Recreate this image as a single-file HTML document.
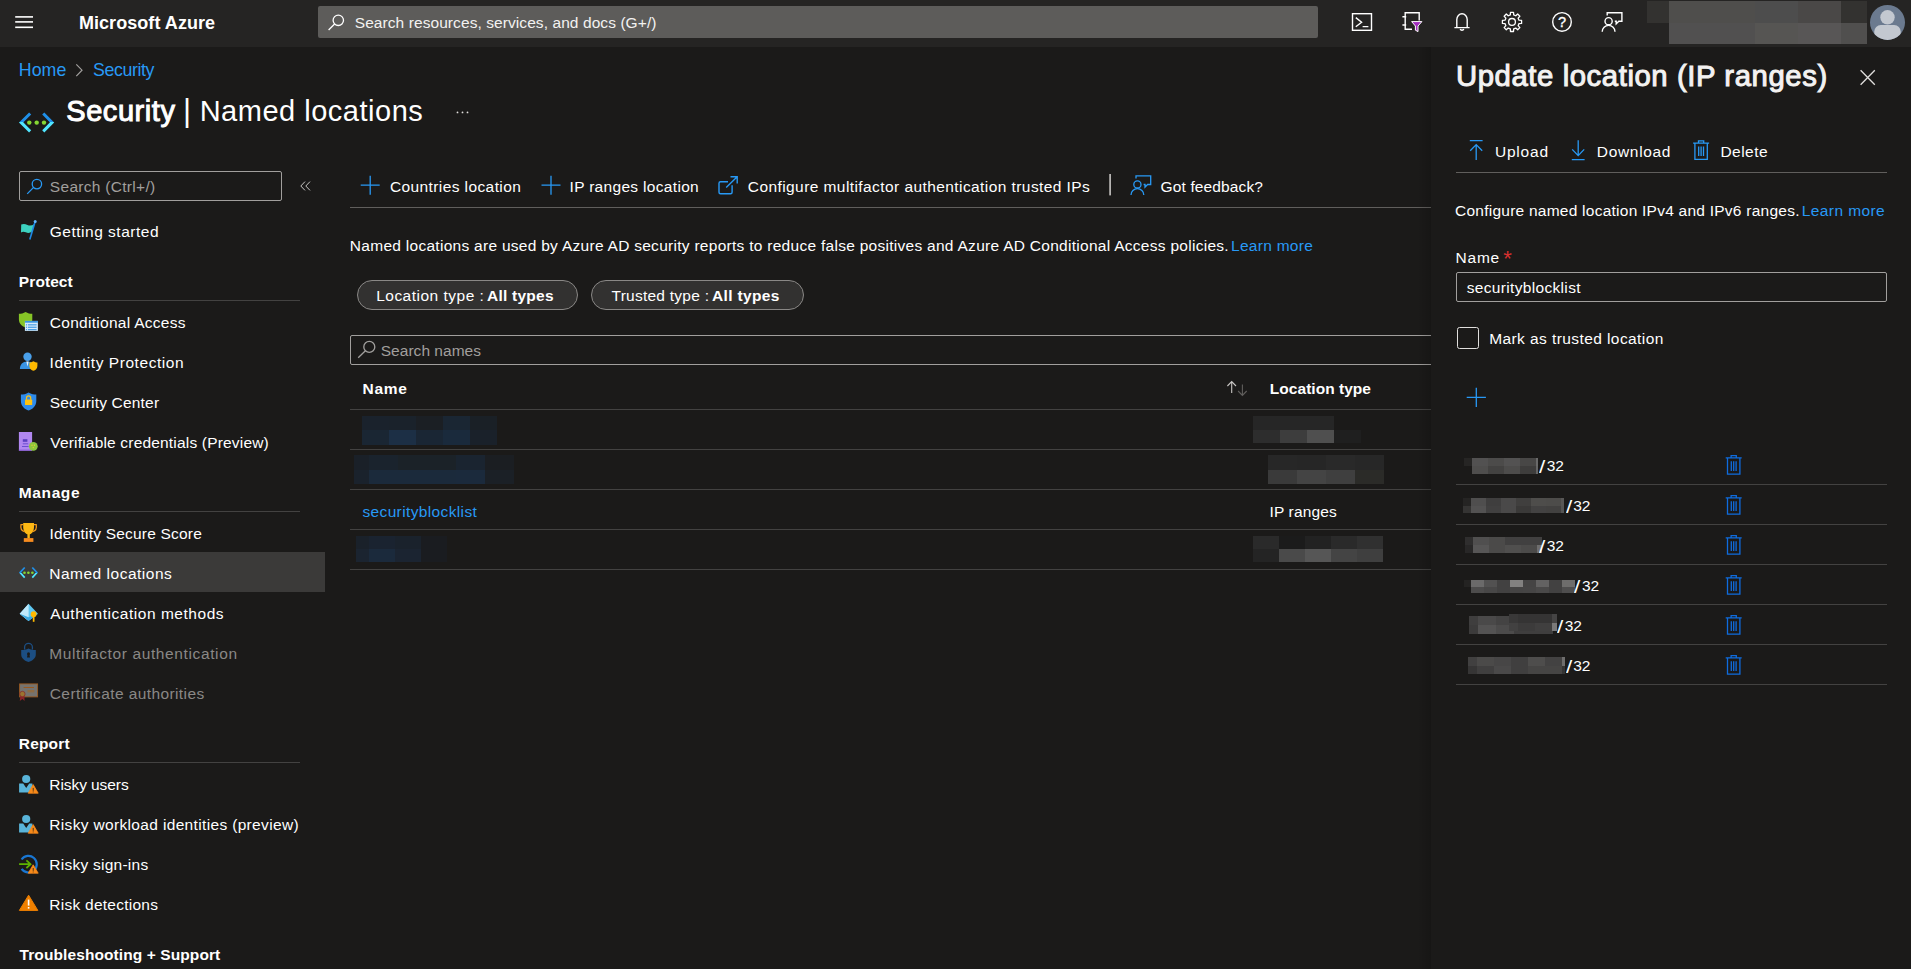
<!DOCTYPE html>
<html lang="en"><head><meta charset="utf-8"><title>Named locations - Microsoft Azure</title>
<style>
html,body{margin:0;padding:0}
body{width:1911px;height:969px;overflow:hidden;background:#1b1a19;font-family:"Liberation Sans", sans-serif;position:relative}
.t{position:absolute;white-space:nowrap;line-height:24px;height:24px}
.b{position:absolute}
#ico{position:absolute;left:0;top:0}
</style></head>
<body>
<div class="b" style="left:0px;top:0px;width:1911px;height:47px;background:#252423;"></div>
<div class="b" style="left:318px;top:6px;width:1000px;height:32px;background:#5d5c5a;border-radius:2px;"></div>
<div class="b" style="left:1647px;top:1px;width:22px;height:22px;background:#333230;"></div>
<div class="b" style="left:1669px;top:1px;width:86px;height:22px;background:#4f4e4c;"></div>
<div class="b" style="left:1755px;top:1px;width:43px;height:22px;background:#4d4d4d;"></div>
<div class="b" style="left:1798px;top:1px;width:43px;height:22px;background:#4a4847;"></div>
<div class="b" style="left:1841px;top:1px;width:26px;height:22px;background:#333230;"></div>
<div class="b" style="left:1669px;top:23px;width:86px;height:21px;background:#515050;"></div>
<div class="b" style="left:1755px;top:23px;width:43px;height:21px;background:#565553;"></div>
<div class="b" style="left:1798px;top:23px;width:43px;height:21px;background:#585656;"></div>
<div class="b" style="left:1841px;top:23px;width:26px;height:21px;background:#504f4e;"></div>
<div class="b" style="left:0px;top:552px;width:325px;height:40px;background:#3b3a39;"></div>
<div class="b" style="left:19px;top:171px;width:263px;height:30px;border:1px solid #a19f9d;box-sizing:border-box;border-radius:2px;"></div>
<div class="b" style="left:19px;top:300px;width:281px;height:1px;background:#434241;"></div>
<div class="b" style="left:19px;top:511px;width:281px;height:1px;background:#434241;"></div>
<div class="b" style="left:19px;top:762px;width:281px;height:1px;background:#434241;"></div>
<div class="b" style="left:350px;top:207px;width:1081px;height:1px;background:#605e5c;"></div>
<div class="b" style="left:357px;top:280px;width:221px;height:30px;background:#323130;border:1px solid #8a8886;box-sizing:border-box;border-radius:15px;"></div>
<div class="b" style="left:591px;top:280px;width:213px;height:30px;background:#323130;border:1px solid #8a8886;box-sizing:border-box;border-radius:15px;"></div>
<div class="b" style="left:350px;top:335px;width:1100px;height:30px;border:1px solid #a19f9d;box-sizing:border-box;border-radius:2px;"></div>
<div class="b" style="left:350px;top:409px;width:1081px;height:1px;background:#434241;"></div>
<div class="b" style="left:350px;top:449px;width:1081px;height:1px;background:#434241;"></div>
<div class="b" style="left:350px;top:489px;width:1081px;height:1px;background:#434241;"></div>
<div class="b" style="left:350px;top:529px;width:1081px;height:1px;background:#434241;"></div>
<div class="b" style="left:350px;top:569px;width:1081px;height:1px;background:#434241;"></div>
<div class="b" style="left:362px;top:416px;width:27px;height:14px;background:#1a222c;"></div>
<div class="b" style="left:362px;top:430px;width:27px;height:15px;background:#1a2633;"></div>
<div class="b" style="left:389px;top:416px;width:27px;height:14px;background:#1a222b;"></div>
<div class="b" style="left:389px;top:430px;width:27px;height:15px;background:#1c2f45;"></div>
<div class="b" style="left:416px;top:416px;width:27px;height:14px;background:#1b1f24;"></div>
<div class="b" style="left:416px;top:430px;width:27px;height:15px;background:#1a2634;"></div>
<div class="b" style="left:443px;top:416px;width:27px;height:14px;background:#1a2633;"></div>
<div class="b" style="left:443px;top:430px;width:27px;height:15px;background:#1a2a3c;"></div>
<div class="b" style="left:470px;top:416px;width:27px;height:14px;background:#1a2026;"></div>
<div class="b" style="left:470px;top:430px;width:27px;height:15px;background:#1a212a;"></div>
<div class="b" style="left:354px;top:455px;width:15px;height:15px;background:#1a2028;"></div>
<div class="b" style="left:354px;top:470px;width:15px;height:14px;background:#1a222c;"></div>
<div class="b" style="left:369px;top:455px;width:29px;height:15px;background:#1a232d;"></div>
<div class="b" style="left:369px;top:470px;width:29px;height:14px;background:#1b2a3b;"></div>
<div class="b" style="left:398px;top:455px;width:58px;height:15px;background:#1b2228;"></div>
<div class="b" style="left:398px;top:470px;width:58px;height:14px;background:#1b2a3b;"></div>
<div class="b" style="left:456px;top:455px;width:29px;height:15px;background:#1a2430;"></div>
<div class="b" style="left:456px;top:470px;width:29px;height:14px;background:#1b2a3c;"></div>
<div class="b" style="left:485px;top:455px;width:29px;height:15px;background:#1b1e22;"></div>
<div class="b" style="left:485px;top:470px;width:29px;height:14px;background:#1b2026;"></div>
<div class="b" style="left:356px;top:536px;width:13px;height:13px;background:#1a212a;"></div>
<div class="b" style="left:356px;top:549px;width:13px;height:13px;background:#1b2430;"></div>
<div class="b" style="left:369px;top:536px;width:26px;height:13px;background:#1a2330;"></div>
<div class="b" style="left:369px;top:549px;width:26px;height:13px;background:#1b2a3c;"></div>
<div class="b" style="left:395px;top:536px;width:26px;height:13px;background:#1a222c;"></div>
<div class="b" style="left:395px;top:549px;width:26px;height:13px;background:#1b2431;"></div>
<div class="b" style="left:421px;top:536px;width:26px;height:13px;background:#1a1c20;"></div>
<div class="b" style="left:421px;top:549px;width:26px;height:13px;background:#1a1c20;"></div>
<div class="b" style="left:1253px;top:416px;width:27px;height:14px;background:#262626;"></div>
<div class="b" style="left:1280px;top:416px;width:27px;height:14px;background:#262626;"></div>
<div class="b" style="left:1307px;top:416px;width:27px;height:14px;background:#262626;"></div>
<div class="b" style="left:1334px;top:416px;width:27px;height:14px;background:#1b1a19;"></div>
<div class="b" style="left:1253px;top:430px;width:27px;height:13px;background:#2d2d2d;"></div>
<div class="b" style="left:1280px;top:430px;width:27px;height:13px;background:#3d3d3d;"></div>
<div class="b" style="left:1307px;top:430px;width:27px;height:13px;background:#4f4f4f;"></div>
<div class="b" style="left:1334px;top:430px;width:27px;height:13px;background:#1f1f1f;"></div>
<div class="b" style="left:1268px;top:455px;width:29px;height:15px;background:#272727;"></div>
<div class="b" style="left:1297px;top:455px;width:29px;height:15px;background:#262626;"></div>
<div class="b" style="left:1326px;top:455px;width:29px;height:15px;background:#292929;"></div>
<div class="b" style="left:1355px;top:455px;width:29px;height:15px;background:#272727;"></div>
<div class="b" style="left:1268px;top:470px;width:29px;height:14px;background:#3a3a3a;"></div>
<div class="b" style="left:1297px;top:470px;width:29px;height:14px;background:#444444;"></div>
<div class="b" style="left:1326px;top:470px;width:29px;height:14px;background:#3f3f3f;"></div>
<div class="b" style="left:1355px;top:470px;width:29px;height:14px;background:#2b2b28;"></div>
<div class="b" style="left:1253px;top:536px;width:26px;height:13px;background:#2a2a2a;"></div>
<div class="b" style="left:1279px;top:536px;width:26px;height:13px;background:#1b1b1b;"></div>
<div class="b" style="left:1305px;top:536px;width:26px;height:13px;background:#222222;"></div>
<div class="b" style="left:1331px;top:536px;width:26px;height:13px;background:#2a2a2a;"></div>
<div class="b" style="left:1357px;top:536px;width:26px;height:13px;background:#303030;"></div>
<div class="b" style="left:1253px;top:549px;width:26px;height:13px;background:#242424;"></div>
<div class="b" style="left:1279px;top:549px;width:26px;height:13px;background:#4a4a4a;"></div>
<div class="b" style="left:1305px;top:549px;width:26px;height:13px;background:#565656;"></div>
<div class="b" style="left:1331px;top:549px;width:26px;height:13px;background:#444444;"></div>
<div class="b" style="left:1357px;top:549px;width:26px;height:13px;background:#3f3f3f;"></div>
<div class="b" style="left:1417px;top:47px;width:14px;height:922px;background:linear-gradient(to right,rgba(0,0,0,0),rgba(0,0,0,0.16));"></div>
<div class="b" style="left:1431px;top:47px;width:480px;height:922px;background:#1b1a19;"></div>
<div class="b" style="left:1456px;top:172px;width:431px;height:1px;background:#605e5c;"></div>
<div class="b" style="left:1456px;top:272px;width:431px;height:30px;border:1px solid #a19f9d;box-sizing:border-box;border-radius:2px;"></div>
<div class="b" style="left:1457px;top:327px;width:22px;height:22px;border:1px solid #e1dfdd;box-sizing:border-box;border-radius:2.5px;"></div>
<div class="b" style="left:1456px;top:484px;width:431px;height:1px;background:#434241;"></div>
<div class="b" style="left:1456px;top:524px;width:431px;height:1px;background:#434241;"></div>
<div class="b" style="left:1456px;top:564px;width:431px;height:1px;background:#434241;"></div>
<div class="b" style="left:1456px;top:604px;width:431px;height:1px;background:#434241;"></div>
<div class="b" style="left:1456px;top:644px;width:431px;height:1px;background:#434241;"></div>
<div class="b" style="left:1456px;top:684px;width:431px;height:1px;background:#434241;"></div>
<div class="b" style="left:1464px;top:458px;width:8px;height:8px;background:#262524;"></div>
<div class="b" style="left:1472px;top:458px;width:16px;height:8px;background:#525151;"></div>
<div class="b" style="left:1472px;top:466px;width:16px;height:8px;background:#4f4e4d;"></div>
<div class="b" style="left:1488px;top:458px;width:16px;height:8px;background:#4c4b4a;"></div>
<div class="b" style="left:1488px;top:466px;width:16px;height:8px;background:#434241;"></div>
<div class="b" style="left:1504px;top:458px;width:16px;height:8px;background:#535252;"></div>
<div class="b" style="left:1504px;top:466px;width:16px;height:8px;background:#4d4c4b;"></div>
<div class="b" style="left:1520px;top:458px;width:16px;height:8px;background:#484746;"></div>
<div class="b" style="left:1520px;top:466px;width:16px;height:8px;background:#3e3d3c;"></div>
<div class="b" style="left:1536px;top:458px;width:2px;height:8px;background:#6a6a6a;"></div>
<div class="b" style="left:1536px;top:466px;width:2px;height:8px;background:#666666;"></div>
<div class="b" style="left:1463px;top:498px;width:8px;height:8px;background:#252423;"></div>
<div class="b" style="left:1463px;top:506px;width:8px;height:7px;background:#353433;"></div>
<div class="b" style="left:1471px;top:498px;width:15px;height:8px;background:#4f4e4e;"></div>
<div class="b" style="left:1471px;top:506px;width:15px;height:7px;background:#535252;"></div>
<div class="b" style="left:1486px;top:498px;width:15px;height:8px;background:#3f3e3e;"></div>
<div class="b" style="left:1486px;top:506px;width:15px;height:7px;background:#414040;"></div>
<div class="b" style="left:1501px;top:498px;width:15px;height:8px;background:#4a4949;"></div>
<div class="b" style="left:1501px;top:506px;width:15px;height:7px;background:#4a4949;"></div>
<div class="b" style="left:1516px;top:498px;width:15px;height:8px;background:#403f3e;"></div>
<div class="b" style="left:1516px;top:506px;width:15px;height:7px;background:#3a3938;"></div>
<div class="b" style="left:1531px;top:498px;width:15px;height:8px;background:#4e4d4b;"></div>
<div class="b" style="left:1531px;top:506px;width:15px;height:7px;background:#434242;"></div>
<div class="b" style="left:1546px;top:498px;width:15px;height:8px;background:#4d4c4a;"></div>
<div class="b" style="left:1546px;top:506px;width:15px;height:7px;background:#424140;"></div>
<div class="b" style="left:1561px;top:498px;width:3px;height:8px;background:#585756;"></div>
<div class="b" style="left:1561px;top:506px;width:3px;height:7px;background:#555555;"></div>
<div class="b" style="left:1465px;top:537px;width:8px;height:8px;background:#2f2e2e;"></div>
<div class="b" style="left:1465px;top:545px;width:8px;height:8px;background:#282727;"></div>
<div class="b" style="left:1473px;top:537px;width:16px;height:8px;background:#504f4f;"></div>
<div class="b" style="left:1473px;top:545px;width:16px;height:8px;background:#575656;"></div>
<div class="b" style="left:1489px;top:537px;width:16px;height:8px;background:#4b4a49;"></div>
<div class="b" style="left:1489px;top:545px;width:16px;height:8px;background:#4b4a49;"></div>
<div class="b" style="left:1505px;top:537px;width:16px;height:8px;background:#414040;"></div>
<div class="b" style="left:1505px;top:545px;width:16px;height:8px;background:#504f4e;"></div>
<div class="b" style="left:1521px;top:537px;width:16px;height:8px;background:#414040;"></div>
<div class="b" style="left:1521px;top:545px;width:16px;height:8px;background:#4c4b4a;"></div>
<div class="b" style="left:1537px;top:537px;width:5px;height:8px;background:#414040;"></div>
<div class="b" style="left:1537px;top:545px;width:5px;height:8px;background:#6f6e6e;"></div>
<div class="b" style="left:1464px;top:580px;width:7px;height:7px;background:#242322;"></div>
<div class="b" style="left:1471px;top:580px;width:13px;height:7px;background:#6b6a6a;"></div>
<div class="b" style="left:1471px;top:587px;width:13px;height:6px;background:#4d4c4c;"></div>
<div class="b" style="left:1484px;top:580px;width:13px;height:7px;background:#525151;"></div>
<div class="b" style="left:1484px;top:587px;width:13px;height:6px;background:#484747;"></div>
<div class="b" style="left:1497px;top:580px;width:13px;height:7px;background:#424141;"></div>
<div class="b" style="left:1497px;top:587px;width:13px;height:6px;background:#424141;"></div>
<div class="b" style="left:1510px;top:580px;width:13px;height:7px;background:#828180;"></div>
<div class="b" style="left:1510px;top:587px;width:13px;height:6px;background:#454444;"></div>
<div class="b" style="left:1523px;top:580px;width:13px;height:7px;background:#454444;"></div>
<div class="b" style="left:1523px;top:587px;width:13px;height:6px;background:#464545;"></div>
<div class="b" style="left:1536px;top:580px;width:13px;height:7px;background:#636262;"></div>
<div class="b" style="left:1536px;top:587px;width:13px;height:6px;background:#4a4949;"></div>
<div class="b" style="left:1549px;top:580px;width:13px;height:7px;background:#424141;"></div>
<div class="b" style="left:1549px;top:587px;width:13px;height:6px;background:#424141;"></div>
<div class="b" style="left:1562px;top:580px;width:13px;height:7px;background:#6e6d6c;"></div>
<div class="b" style="left:1562px;top:587px;width:13px;height:6px;background:#4f4e4e;"></div>
<div class="b" style="left:1469px;top:616px;width:9px;height:9px;background:#3f3e3e;"></div>
<div class="b" style="left:1469px;top:625px;width:9px;height:9px;background:#3c3b3b;"></div>
<div class="b" style="left:1478px;top:616px;width:18px;height:9px;background:#4a4949;"></div>
<div class="b" style="left:1478px;top:625px;width:18px;height:9px;background:#545353;"></div>
<div class="b" style="left:1496px;top:616px;width:18px;height:9px;background:#444343;"></div>
<div class="b" style="left:1496px;top:625px;width:18px;height:9px;background:#4c4b4b;"></div>
<div class="b" style="left:1514px;top:631px;width:39px;height:3px;background:#3f3e3e;"></div>
<div class="b" style="left:1509px;top:614px;width:9px;height:9px;background:#393838;"></div>
<div class="b" style="left:1509px;top:623px;width:9px;height:8px;background:#424141;"></div>
<div class="b" style="left:1518px;top:614px;width:17px;height:9px;background:#353434;"></div>
<div class="b" style="left:1518px;top:623px;width:17px;height:8px;background:#3c3b3b;"></div>
<div class="b" style="left:1535px;top:614px;width:17px;height:9px;background:#353434;"></div>
<div class="b" style="left:1535px;top:623px;width:17px;height:8px;background:#403f3f;"></div>
<div class="b" style="left:1552px;top:614px;width:5px;height:9px;background:#454444;"></div>
<div class="b" style="left:1552px;top:623px;width:5px;height:8px;background:#7a7979;"></div>
<div class="b" style="left:1468px;top:657px;width:9px;height:9px;background:#414040;"></div>
<div class="b" style="left:1468px;top:666px;width:9px;height:8px;background:#363535;"></div>
<div class="b" style="left:1477px;top:657px;width:17px;height:9px;background:#4b4a49;"></div>
<div class="b" style="left:1477px;top:666px;width:17px;height:8px;background:#403f3f;"></div>
<div class="b" style="left:1494px;top:657px;width:17px;height:9px;background:#474646;"></div>
<div class="b" style="left:1494px;top:666px;width:17px;height:8px;background:#4a4949;"></div>
<div class="b" style="left:1511px;top:657px;width:17px;height:9px;background:#403f3f;"></div>
<div class="b" style="left:1511px;top:666px;width:17px;height:8px;background:#403f3f;"></div>
<div class="b" style="left:1528px;top:657px;width:17px;height:9px;background:#4e4d4c;"></div>
<div class="b" style="left:1528px;top:666px;width:17px;height:8px;background:#464544;"></div>
<div class="b" style="left:1545px;top:657px;width:17px;height:9px;background:#434242;"></div>
<div class="b" style="left:1545px;top:666px;width:17px;height:8px;background:#464544;"></div>
<div class="b" style="left:1562px;top:657px;width:3px;height:9px;background:#6e6d6d;"></div>
<div class="b" style="left:1562px;top:666px;width:3px;height:8px;background:#353434;"></div>
<svg id="ico" width="1911" height="969" viewBox="0 0 1911 969">
<rect x="15.2" y="16.1" width="17.8" height="1.6" fill="#fff"/>
<rect x="15.2" y="21.1" width="17.8" height="1.6" fill="#fff"/>
<rect x="15.2" y="26.5" width="17.8" height="1.6" fill="#fff"/>
<g fill="none" stroke="#fff" stroke-width="1.3"><circle cx="338.3" cy="20.3" r="5.2"/><path d="M334.6 24 L328.6 30"/></g>
<g fill="none" stroke="#fff" stroke-width="1.4"><rect x="1352.5" y="13.7" width="19" height="16.6"/><path d="M1355.8 17.6 L1361.6 22.2 L1355.8 26.8 M1362.6 26.6 H1368.4"/></g>
<g fill="none" stroke="#fff" stroke-width="1.4"><path d="M1412 29.3 H1405.2 V12.7 H1419.2 V20.5"/><path d="M1402.4 16.8 H1406.2 M1402.4 25 H1406.2"/></g>
<path d="M1411.6 21.6 H1421.9 L1418 26 V31.6 L1415.4 30.2 V26 Z" fill="#a12bbd" stroke="#fff" stroke-width="1"/>
<g fill="none" stroke="#fff" stroke-width="1.4"><path d="M1454.4 27.6 H1469.6 M1456.8 27.6 V19.6 A5.2 5.9 0 0 1 1467.2 19.6 V27.6"/><path d="M1460.2 29 A1.9 1.9 0 0 0 1463.8 29"/></g>
<g fill="none" stroke="#fff" stroke-width="1.3" stroke-linejoin="round"><path d="M1521.58 20.38 L1521.58 23.42 L1519.00 23.58 L1518.14 25.66 L1519.85 27.60 L1517.70 29.75 L1515.76 28.04 L1513.68 28.90 L1513.52 31.48 L1510.48 31.48 L1510.32 28.90 L1508.24 28.04 L1506.30 29.75 L1504.15 27.60 L1505.86 25.66 L1505.00 23.58 L1502.42 23.42 L1502.42 20.38 L1505.00 20.22 L1505.86 18.14 L1504.15 16.20 L1506.30 14.05 L1508.24 15.76 L1510.32 14.90 L1510.48 12.32 L1513.52 12.32 L1513.68 14.90 L1515.76 15.76 L1517.70 14.05 L1519.85 16.20 L1518.14 18.14 L1519.00 20.22 Z"/><circle cx="1512" cy="21.9" r="3.4"/></g>
<circle cx="1562" cy="21.9" r="9.3" fill="none" stroke="#fff" stroke-width="1.4"/>
<text x="1562" y="27.3" font-family="Liberation Sans, sans-serif" font-size="14.5" font-weight="400" fill="#fff" stroke="#fff" stroke-width="0.35" text-anchor="middle">?</text>
<g fill="none" stroke="#fff" stroke-width="1.4" stroke-linejoin="round" transform="translate(1601.6 12)"><circle cx="7" cy="9.2" r="3.6"/><path d="M0.6 19.8 A6.4 6.4 0 0 1 13.4 19.8"/><path stroke-linejoin="miter" d="M5.6 3.4 V0.7 H20.3 V9.3 H17.2 L14.6 11.9 V9.3 H13.2"/></g>
<defs><clipPath id="av"><circle cx="1887.5" cy="22.4" r="17.5"/></clipPath></defs>
<circle cx="1887.5" cy="22.4" r="17.5" fill="#6b7a8f"/>
<g clip-path="url(#av)" fill="#c3c8d0"><circle cx="1887.5" cy="17.3" r="7.2"/><path d="M1874.3 40 V31.5 A6.5 6.5 0 0 1 1880.8 25 H1894.2 A6.5 6.5 0 0 1 1900.7 31.5 V40 Z"/></g>
<path d="M76.3 64.3 L82 70.2 L76.3 76.1" fill="none" stroke="#a19f9d" stroke-width="1.2"/>
<defs><linearGradient id="ng1" gradientUnits="userSpaceOnUse" x1="0" y1="112.4" x2="0" y2="132.4"><stop offset="0.5" stop-color="#1f8fe8"/><stop offset="0.5" stop-color="#50e6ff"/></linearGradient></defs><g fill="none" stroke="url(#ng1)" stroke-width="3" stroke-linejoin="miter"><path d="M30.1394 113.461 L21.1213 122.4 L30.1394 131.339"/><path d="M43.2607 113.461 L52.0787 122.4 L43.2607 131.339"/></g><circle cx="29.3" cy="122.6" r="2.2" fill="#86d633"/><circle cx="36.7" cy="122.6" r="2.2" fill="#86d633"/><circle cx="44" cy="122.6" r="2.2" fill="#86d633"/>
<circle cx="457.5" cy="112.4" r="0.9" fill="#e1dfdd"/>
<circle cx="462.5" cy="112.4" r="0.9" fill="#e1dfdd"/>
<circle cx="467.5" cy="112.4" r="0.9" fill="#e1dfdd"/>
<g fill="none" stroke="#2899f5" stroke-width="1.3"><circle cx="36.9" cy="184.1" r="4.7"/><path d="M33.6 187.4 L27.2 193.9"/></g>
<path d="M305 181.6 L300.8 186 L305 190.4 M310 181.6 L305.8 186 L310 190.4" fill="none" stroke="#c8c6c4" stroke-width="1"/>
<path d="M21.2 224.6 Q24 223.2 27.5 225 Q31 226.5 34.4 224 L32.2 231.6 Q29 233.8 25.8 232.3 Q23 231 21 232.6 Z" fill="#3dd2c0"/>
<path d="M35.1 221.8 L29.8 239.6" stroke="#1e88e5" stroke-width="1.6" fill="none"/><circle cx="35.2" cy="221.6" r="1.5" fill="#5eb5ff"/>
<path d="M25.6 312 C23.5 313.4 21 313.8 18.9 313.8 V319.5 C18.9 324 22.5 326.5 25.6 327.4 C28.7 326.5 32.3 324 32.3 319.5 V313.8 C30.2 313.8 27.7 313.4 25.6 312 Z" fill="#86c426"/>
<rect x="24.9" y="320.9" width="13" height="10" fill="#d5ebfb"/><rect x="24.9" y="320.9" width="13" height="1.8" fill="#3a96e0"/>
<rect x="28" y="324.3" width="8.6" height="1.1" fill="#3a96e0"/><rect x="25.9" y="324.3" width="1.2" height="1.1" fill="#3a96e0"/>
<rect x="28" y="326.7" width="8.6" height="1.1" fill="#3a96e0"/><rect x="25.9" y="326.7" width="1.2" height="1.1" fill="#3a96e0"/>
<rect x="28" y="329.1" width="8.6" height="1.1" fill="#3a96e0"/><rect x="25.9" y="329.1" width="1.2" height="1.1" fill="#3a96e0"/>
<circle cx="27.5" cy="356.7" r="4.2" fill="#4aa0ea"/><path d="M19.9 369 C19.9 364.5 22.5 361.4 27.5 361.4 C32.5 361.4 34.9 364.5 34.9 369 Z" fill="#3a93e2"/><path d="M26.3 361.6 L27.5 366.5 L28.7 361.6 Z" fill="#e8f1fb"/>
<path d="M33.4 361.2 C32 362.1 30.6 362.4 29.4 362.4 V366 C29.4 368.6 31.4 370.2 33.4 370.8 C35.4 370.2 37.4 368.6 37.4 366 V362.4 C36.2 362.4 34.8 362.1 33.4 361.2 Z" fill="#ffb900"/>
<path d="M28.6 392.4 C26 394 23.2 394.5 20.9 394.5 V401 C20.9 406.2 25 409.4 28.6 410.6 C32.2 409.4 36.3 406.2 36.3 401 V394.5 C34 394.5 31.2 394 28.6 392.4 Z" fill="#2e8bea"/>
<rect x="25" y="399.6" width="7.2" height="5.4" rx="0.6" fill="#ffc20e"/><path d="M26.5 399.8 V398 A2.1 2.1 0 0 1 30.7 398 V399.8" fill="none" stroke="#ffc20e" stroke-width="1.2"/>
<rect x="18.9" y="432" width="13.2" height="18.7" fill="#b187f0"/><rect x="18.9" y="449.6" width="13.2" height="1.1" fill="#8a5fd6"/>
<rect x="22.8" y="439.2" width="4.6" height="2.6" fill="#5a3fc0"/><rect x="22.8" y="443.3" width="5.4" height="1" fill="#6a4fd0"/><rect x="22" y="446" width="6.6" height="1" fill="#6a4fd0"/>
<circle cx="33.3" cy="446.3" r="4.4" fill="#8cc63e"/><circle cx="32" cy="445.2" r="0.6" fill="#ffd02c"/><circle cx="34.4" cy="445.2" r="0.6" fill="#ffd02c"/><circle cx="33.2" cy="447.6" r="0.6" fill="#ffd02c"/>
<path d="M23.2 522.9 H34 V527 C34 531.5 31.5 534.4 28.6 534.4 C25.7 534.4 23.2 531.5 23.2 527 Z" fill="#fdb813"/>
<path d="M23.4 524.6 H21 C20.4 528 21.6 531 24.6 531.6 M33.8 524.6 H36.2 C36.8 528 35.6 531 32.6 531.6" fill="none" stroke="#f59b1c" stroke-width="1.3"/>
<rect x="27.4" y="534" width="2.4" height="4.4" fill="#fdb813"/><rect x="23.8" y="538.1" width="9.6" height="3.8" fill="#f68b1f"/>
<defs><linearGradient id="ng2" gradientUnits="userSpaceOnUse" x1="0" y1="566.9" x2="0" y2="578.2"><stop offset="0.5" stop-color="#1f8fe8"/><stop offset="0.5" stop-color="#50e6ff"/></linearGradient></defs><g fill="none" stroke="url(#ng2)" stroke-width="1.7" stroke-linejoin="miter"><path d="M24.699 567.501 L20.1021 572.55 L24.699 577.599"/><path d="M32.301 567.501 L36.8979 572.55 L32.301 577.599"/></g><circle cx="24.5" cy="572.75" r="1.3" fill="#86d633"/><circle cx="28.4" cy="572.75" r="1.3" fill="#86d633"/><circle cx="32.4" cy="572.75" r="1.3" fill="#86d633"/>
<path d="M28.6 603.7 L37.9 613.8 L28.6 621 L19.7 613.8 Z" fill="#5ec8f2"/><path d="M28.6 603.7 L28.6 621 L19.7 613.8 Z" fill="#bfe9fb"/><path d="M19.7 613.8 L28.6 617.2 L37.9 613.8 L28.6 621 Z" fill="#3ba9e0"/>
<circle cx="33.6" cy="614.2" r="2.9" fill="#ffb900"/><rect x="32.8" y="616" width="1.7" height="5.8" fill="#ffb900"/>
<path d="M28.5 648.4 C26.3 649.7 23.6 650 21.2 650 V654.6 C21.2 658.6 24.9 661 28.5 662 C32.1 661 35.8 658.6 35.8 654.6 V650 C33.4 650 30.7 649.7 28.5 648.4 Z" fill="#1c4e82"/><path d="M24.6 649.6 V647.2 A3.9 3.9 0 0 1 32.4 647.2 V649.6" fill="none" stroke="#1c4e82" stroke-width="1.3"/><circle cx="28.5" cy="653.8" r="1.5" fill="#1b1a19"/><path d="M27.6 654.5 L27 657.6 H30 L29.4 654.5 Z" fill="#1b1a19"/>
<rect x="19.6" y="683.9" width="18" height="13" fill="#75736f" stroke="#9a5a20" stroke-width="0.9"/><rect x="23.6" y="687" width="10.4" height="1" fill="#9a5a20"/><rect x="27.5" y="690" width="6.8" height="2.4" fill="#8f6c44"/>
<path d="M20.4 695 L19.8 700.9 L22.4 699 L24.6 700.9 L24.4 695 Z" fill="#8a2428"/><circle cx="22.4" cy="694" r="2.7" fill="#9a7430" stroke="#8a2428" stroke-width="0.7"/>
<circle cx="26.2" cy="779" r="4.1" fill="#59b4d9"/><path d="M19.1 783.6 H23.2 L26.2 788 L29.2 783.6 H32.4 V792.6 H19.1 Z" fill="#59b4d9"/><path d="M33.2 784.6 L38.2 793.2 H28.2 Z" fill="#f7891a" stroke="#f7891a" stroke-width="0.8" stroke-linejoin="round"/><rect x="32.75" y="787.868" width="0.9" height="2.924" fill="#3a2a10"/><rect x="32.75" y="791.48" width="0.9" height="0.86" fill="#3a2a10"/>
<circle cx="26.2" cy="819" r="4.1" fill="#59b4d9"/><path d="M19.1 823.6 H23.2 L26.2 828 L29.2 823.6 H32.4 V832.6 H19.1 Z" fill="#59b4d9"/><path d="M33.2 824.6 L38.2 833.2 H28.2 Z" fill="#f7891a" stroke="#f7891a" stroke-width="0.8" stroke-linejoin="round"/><rect x="32.75" y="827.868" width="0.9" height="2.924" fill="#3a2a10"/><rect x="32.75" y="831.48" width="0.9" height="0.86" fill="#3a2a10"/>
<path d="M21.6 859.5 A8.3 8.3 0 1 1 21.6 868.9" fill="none" stroke="#1976d2" stroke-width="2.2"/>
<path d="M19.1 864.2 H30 M26.4 860.4 L30.6 864.2 L26.4 868" fill="none" stroke="#5db300" stroke-width="1.7"/>
<path d="M33.2 864.8 L38.2 873.2 H28.2 Z" fill="#f7891a" stroke="#f7891a" stroke-width="0.8" stroke-linejoin="round"/><rect x="32.75" y="867.992" width="0.9" height="2.856" fill="#3a2a10"/><rect x="32.75" y="871.52" width="0.9" height="0.84" fill="#3a2a10"/>
<path d="M28.6 895.2 L37.8 910.4 H19.4 Z" fill="#f08000" stroke="#f08000" stroke-width="1" stroke-linejoin="round"/><rect x="27.8" y="899.6" width="1.6" height="6" fill="#fff"/><rect x="27.8" y="907" width="1.6" height="1.6" fill="#fff"/>
<path d="M360.7 185.2 H379.7 M370.2 175.7 V194.7" stroke="#2899f5" stroke-width="1.3" fill="none"/>
<path d="M541.5 185.2 H560.5 M551 175.7 V194.7" stroke="#2899f5" stroke-width="1.3" fill="none"/>
<g fill="none" stroke="#2899f5" stroke-width="1.4"><path d="M728 181.7 H720.5 Q719 181.7 719 183.2 V192.2 Q719 193.7 720.5 193.7 H730.6 Q732.1 193.7 732.1 192.2 V185.2"/><path d="M726.2 187.5 L737.2 176.7 M730.5 176.7 H737.2 V183.4"/></g>
<rect x="1109.3" y="174" width="1.6" height="21.4" fill="#c8c6c4"/>
<g fill="none" stroke="#2899f5" stroke-width="1.3" stroke-linejoin="round" transform="translate(1130.4 175.2)"><circle cx="7" cy="9.2" r="3.6"/><path d="M0.6 19.8 A6.4 6.4 0 0 1 13.4 19.8"/><path stroke-linejoin="miter" d="M5.6 3.4 V0.7 H20.3 V9.3 H17.2 L14.6 11.9 V9.3 H13.2"/></g>
<g fill="none" stroke="#a19f9d" stroke-width="1.3"><circle cx="369.3" cy="346.9" r="5.5"/><path d="M365.4 350.8 L358.2 357.8"/></g>
<path d="M1231.7 393 V381.6 M1227.4 386 L1231.7 381.6 L1236 386" fill="none" stroke="#c8c6c4" stroke-width="1.1"/>
<path d="M1242.4 384.4 V395.4 M1238.1 391 L1242.4 395.4 L1246.7 391" fill="none" stroke="#605e5c" stroke-width="1.1"/>
<path d="M1860.6 70.3 L1874.8 84.7 M1874.8 70.3 L1860.6 84.7" stroke="#e1dfdd" stroke-width="1.3" fill="none"/>
<g fill="none" stroke="#2899f5" stroke-width="1.3"><path d="M1469.8 140.6 H1482.6 M1476.2 160 V144.6 M1470.2 150.8 L1476.2 144.6 L1482.2 150.8"/></g>
<g fill="none" stroke="#2899f5" stroke-width="1.3"><path d="M1571.8 159.6 H1584.6 M1578.2 140.2 V155.6 M1572.2 149.4 L1578.2 155.6 L1584.2 149.4"/></g>
<g fill="none" stroke="#2899f5" stroke-width="1.3" transform="translate(1693.1 140.1) scale(1)"><path d="M0 3 H16 M5.4 3 V0.7 H10.6 V3 M1.8 3 V19.3 H14.2 V3"/><path d="M5.6 6.4 V16 M8 6.4 V16 M10.4 6.4 V16"/></g>
<path d="M1466.7 397.3 H1485.9 M1476.3 387.7 V406.9" stroke="#2899f5" stroke-width="1.3" fill="none"/>
<g fill="none" stroke="#0f6cde" stroke-width="1.3" transform="translate(1725.7 454.9) scale(1)"><path d="M0 3 H16 M5.4 3 V0.7 H10.6 V3 M1.8 3 V19.3 H14.2 V3"/><path d="M5.6 6.4 V16 M8 6.4 V16 M10.4 6.4 V16"/></g>
<g fill="none" stroke="#0f6cde" stroke-width="1.3" transform="translate(1725.7 494.9) scale(1)"><path d="M0 3 H16 M5.4 3 V0.7 H10.6 V3 M1.8 3 V19.3 H14.2 V3"/><path d="M5.6 6.4 V16 M8 6.4 V16 M10.4 6.4 V16"/></g>
<g fill="none" stroke="#0f6cde" stroke-width="1.3" transform="translate(1725.7 534.9) scale(1)"><path d="M0 3 H16 M5.4 3 V0.7 H10.6 V3 M1.8 3 V19.3 H14.2 V3"/><path d="M5.6 6.4 V16 M8 6.4 V16 M10.4 6.4 V16"/></g>
<g fill="none" stroke="#0f6cde" stroke-width="1.3" transform="translate(1725.7 574.9) scale(1)"><path d="M0 3 H16 M5.4 3 V0.7 H10.6 V3 M1.8 3 V19.3 H14.2 V3"/><path d="M5.6 6.4 V16 M8 6.4 V16 M10.4 6.4 V16"/></g>
<g fill="none" stroke="#0f6cde" stroke-width="1.3" transform="translate(1725.7 614.9) scale(1)"><path d="M0 3 H16 M5.4 3 V0.7 H10.6 V3 M1.8 3 V19.3 H14.2 V3"/><path d="M5.6 6.4 V16 M8 6.4 V16 M10.4 6.4 V16"/></g>
<g fill="none" stroke="#0f6cde" stroke-width="1.3" transform="translate(1725.7 654.9) scale(1)"><path d="M0 3 H16 M5.4 3 V0.7 H10.6 V3 M1.8 3 V19.3 H14.2 V3"/><path d="M5.6 6.4 V16 M8 6.4 V16 M10.4 6.4 V16"/></g>
</svg>
<div class="t" id="t0" style="left:78.94px;top:11.00px;font-size:18px;font-weight:700;color:#ffffff;letter-spacing:0.059px;">Microsoft Azure</div>
<div class="t" id="t1" style="left:354.74px;top:11.00px;font-size:15.5px;font-weight:400;color:#f3f2f1;letter-spacing:0.078px;">Search resources, services, and docs (G+/)</div>
<div class="t" id="t2" style="left:18.73px;top:58.00px;font-size:17.8px;font-weight:400;color:#2899f5;letter-spacing:0.087px;">Home</div>
<div class="t" id="t3" style="left:93.00px;top:58.00px;font-size:17.8px;font-weight:400;color:#2899f5;letter-spacing:-0.389px;">Security</div>
<div class="t" id="t4" style="left:66.25px;top:99.00px;font-size:29px;font-weight:400;color:#ffffff;letter-spacing:0.562px;-webkit-text-stroke:1px #fff;">Security</div>
<div class="t" id="t5" style="left:182.93px;top:99.00px;font-size:31px;font-weight:400;color:#ffffff;letter-spacing:0.000px;">|</div>
<div class="t" id="t6" style="left:199.67px;top:99.00px;font-size:29px;font-weight:400;color:#ffffff;letter-spacing:0.511px;">Named locations</div>
<div class="t" id="t7" style="left:49.85px;top:175.00px;font-size:15.5px;font-weight:400;color:#a19f9d;letter-spacing:0.293px;">Search (Ctrl+/)</div>
<div class="t" id="t8" style="left:49.79px;top:220.00px;font-size:15.5px;font-weight:400;color:#ffffff;letter-spacing:0.507px;">Getting started</div>
<div class="t" id="t9" style="left:49.79px;top:311.00px;font-size:15.5px;font-weight:400;color:#ffffff;letter-spacing:0.281px;">Conditional Access</div>
<div class="t" id="t10" style="left:49.53px;top:351.00px;font-size:15.5px;font-weight:400;color:#ffffff;letter-spacing:0.556px;">Identity Protection</div>
<div class="t" id="t11" style="left:49.63px;top:391.00px;font-size:15.5px;font-weight:400;color:#ffffff;letter-spacing:0.187px;">Security Center</div>
<div class="t" id="t12" style="left:50.27px;top:431.00px;font-size:15.5px;font-weight:400;color:#ffffff;letter-spacing:0.183px;">Verifiable credentials (Preview)</div>
<div class="t" id="t13" style="left:49.53px;top:522.00px;font-size:15.5px;font-weight:400;color:#ffffff;letter-spacing:0.208px;">Identity Secure Score</div>
<div class="t" id="t14" style="left:49.26px;top:562.00px;font-size:15.5px;font-weight:400;color:#ffffff;letter-spacing:0.507px;">Named locations</div>
<div class="t" id="t15" style="left:50.27px;top:602.00px;font-size:15.5px;font-weight:400;color:#ffffff;letter-spacing:0.540px;">Authentication methods</div>
<div class="t" id="t16" style="left:49.26px;top:642.00px;font-size:15.5px;font-weight:400;color:#8a8886;letter-spacing:0.618px;">Multifactor authentication</div>
<div class="t" id="t17" style="left:49.79px;top:682.00px;font-size:15.5px;font-weight:400;color:#8a8886;letter-spacing:0.399px;">Certificate authorities</div>
<div class="t" id="t18" style="left:49.26px;top:773.00px;font-size:15.5px;font-weight:400;color:#ffffff;letter-spacing:-0.063px;">Risky users</div>
<div class="t" id="t19" style="left:49.26px;top:813.00px;font-size:15.5px;font-weight:400;color:#ffffff;letter-spacing:0.341px;">Risky workload identities (preview)</div>
<div class="t" id="t20" style="left:49.26px;top:853.00px;font-size:15.5px;font-weight:400;color:#ffffff;letter-spacing:0.254px;">Risky sign-ins</div>
<div class="t" id="t21" style="left:49.26px;top:893.00px;font-size:15.5px;font-weight:400;color:#ffffff;letter-spacing:0.261px;">Risk detections</div>
<div class="t" id="t22" style="left:18.87px;top:270.00px;font-size:15.5px;font-weight:700;color:#ffffff;letter-spacing:0.075px;">Protect</div>
<div class="t" id="t23" style="left:18.87px;top:481.00px;font-size:15.5px;font-weight:700;color:#ffffff;letter-spacing:0.591px;">Manage</div>
<div class="t" id="t24" style="left:18.87px;top:732.00px;font-size:15.5px;font-weight:700;color:#ffffff;letter-spacing:0.154px;">Report</div>
<div class="t" id="t25" style="left:19.54px;top:943.00px;font-size:15.5px;font-weight:700;color:#ffffff;letter-spacing:0.094px;">Troubleshooting + Support</div>
<div class="t" id="t26" style="left:389.89px;top:175.00px;font-size:15.5px;font-weight:400;color:#ffffff;letter-spacing:0.407px;">Countries location</div>
<div class="t" id="t27" style="left:569.50px;top:175.00px;font-size:15.5px;font-weight:400;color:#ffffff;letter-spacing:0.320px;">IP ranges location</div>
<div class="t" id="t28" style="left:747.79px;top:175.00px;font-size:15.5px;font-weight:400;color:#ffffff;letter-spacing:0.422px;">Configure multifactor authentication trusted IPs</div>
<div class="t" id="t29" style="left:1160.61px;top:175.00px;font-size:15.5px;font-weight:400;color:#ffffff;letter-spacing:0.130px;">Got feedback?</div>
<div class="t" id="t30" style="left:349.85px;top:234.00px;font-size:15.5px;font-weight:400;color:#ffffff;letter-spacing:0.280px;">Named locations are used by Azure AD security reports to reduce false positives and Azure AD Conditional Access policies.</div>
<div class="t" id="t31" style="left:1231.01px;top:234.00px;font-size:15.5px;font-weight:400;color:#2899f5;letter-spacing:0.284px;">Learn more</div>
<div class="t" id="t32" style="left:376.17px;top:284.00px;font-size:15.5px;font-weight:400;color:#ffffff;letter-spacing:0.491px;">Location type :</div>
<div class="t" id="t33" style="left:487.03px;top:284.00px;font-size:15.5px;font-weight:700;color:#ffffff;letter-spacing:0.236px;">All types</div>
<div class="t" id="t34" style="left:611.50px;top:284.00px;font-size:15.5px;font-weight:400;color:#ffffff;letter-spacing:0.252px;">Trusted type :</div>
<div class="t" id="t35" style="left:711.94px;top:284.00px;font-size:15.5px;font-weight:700;color:#ffffff;letter-spacing:0.345px;">All types</div>
<div class="t" id="t36" style="left:380.74px;top:339.00px;font-size:15.5px;font-weight:400;color:#a19f9d;letter-spacing:0.030px;">Search names</div>
<div class="t" id="t37" style="left:362.61px;top:377.00px;font-size:15.5px;font-weight:700;color:#ffffff;letter-spacing:0.723px;">Name</div>
<div class="t" id="t38" style="left:1269.87px;top:377.00px;font-size:15.5px;font-weight:700;color:#ffffff;letter-spacing:0.031px;">Location type</div>
<div class="t" id="t39" style="left:362.41px;top:500.00px;font-size:15.5px;font-weight:400;color:#2899f5;letter-spacing:0.367px;">securityblocklist</div>
<div class="t" id="t40" style="left:1269.53px;top:500.00px;font-size:15.5px;font-weight:400;color:#ffffff;letter-spacing:0.139px;">IP ranges</div>
<div class="t" id="t41" style="left:1455.98px;top:64.00px;font-size:29.3px;font-weight:400;color:#f3f2f1;letter-spacing:0.579px;-webkit-text-stroke:1px #f3f2f1;">Update location (IP ranges)</div>
<div class="t" id="t42" style="left:1494.91px;top:140.00px;font-size:15.5px;font-weight:400;color:#ffffff;letter-spacing:0.802px;">Upload</div>
<div class="t" id="t43" style="left:1596.80px;top:140.00px;font-size:15.5px;font-weight:400;color:#ffffff;letter-spacing:0.677px;">Download</div>
<div class="t" id="t44" style="left:1720.45px;top:140.00px;font-size:15.5px;font-weight:400;color:#ffffff;letter-spacing:0.454px;">Delete</div>
<div class="t" id="t45" style="left:1455.00px;top:199.00px;font-size:15.5px;font-weight:400;color:#ffffff;letter-spacing:0.244px;">Configure named location IPv4 and IPv6 ranges.</div>
<div class="t" id="t46" style="left:1801.80px;top:199.00px;font-size:15.5px;font-weight:400;color:#2899f5;letter-spacing:0.401px;">Learn more</div>
<div class="t" id="t47" style="left:1455.49px;top:246.00px;font-size:15.5px;font-weight:400;color:#ffffff;letter-spacing:0.802px;">Name</div>
<div class="t" id="t48" style="left:1503.32px;top:247.00px;font-size:22px;font-weight:400;color:#d8302f;letter-spacing:0.000px;">*</div>
<div class="t" id="t49" style="left:1466.76px;top:276.00px;font-size:15.5px;font-weight:400;color:#ffffff;letter-spacing:0.328px;">securityblocklist</div>
<div class="t" id="t50" style="left:1489.17px;top:327.00px;font-size:15.5px;font-weight:400;color:#ffffff;letter-spacing:0.419px;">Mark as trusted location</div>
<div class="t" id="t51" style="left:1539.00px;top:455.00px;font-size:19px;font-weight:400;color:#ffffff;letter-spacing:0.000px;transform:scaleX(1.18);transform-origin:0 0;">/</div>
<div class="t" id="t52" style="left:1546.70px;top:454.00px;font-size:15.5px;font-weight:400;color:#ffffff;letter-spacing:-0.100px;">32</div>
<div class="t" id="t53" style="left:1565.50px;top:495.00px;font-size:19px;font-weight:400;color:#ffffff;letter-spacing:0.000px;transform:scaleX(1.18);transform-origin:0 0;">/</div>
<div class="t" id="t54" style="left:1573.20px;top:494.00px;font-size:15.5px;font-weight:400;color:#ffffff;letter-spacing:-0.100px;">32</div>
<div class="t" id="t55" style="left:1539.00px;top:535.00px;font-size:19px;font-weight:400;color:#ffffff;letter-spacing:0.000px;transform:scaleX(1.18);transform-origin:0 0;">/</div>
<div class="t" id="t56" style="left:1546.70px;top:534.00px;font-size:15.5px;font-weight:400;color:#ffffff;letter-spacing:-0.100px;">32</div>
<div class="t" id="t57" style="left:1574.40px;top:575.00px;font-size:19px;font-weight:400;color:#ffffff;letter-spacing:0.000px;transform:scaleX(1.18);transform-origin:0 0;">/</div>
<div class="t" id="t58" style="left:1582.10px;top:574.00px;font-size:15.5px;font-weight:400;color:#ffffff;letter-spacing:-0.100px;">32</div>
<div class="t" id="t59" style="left:1557.00px;top:615.00px;font-size:19px;font-weight:400;color:#ffffff;letter-spacing:0.000px;transform:scaleX(1.18);transform-origin:0 0;">/</div>
<div class="t" id="t60" style="left:1564.70px;top:614.00px;font-size:15.5px;font-weight:400;color:#ffffff;letter-spacing:-0.100px;">32</div>
<div class="t" id="t61" style="left:1565.50px;top:655.00px;font-size:19px;font-weight:400;color:#ffffff;letter-spacing:0.000px;transform:scaleX(1.18);transform-origin:0 0;">/</div>
<div class="t" id="t62" style="left:1573.20px;top:654.00px;font-size:15.5px;font-weight:400;color:#ffffff;letter-spacing:-0.100px;">32</div>
</body></html>
